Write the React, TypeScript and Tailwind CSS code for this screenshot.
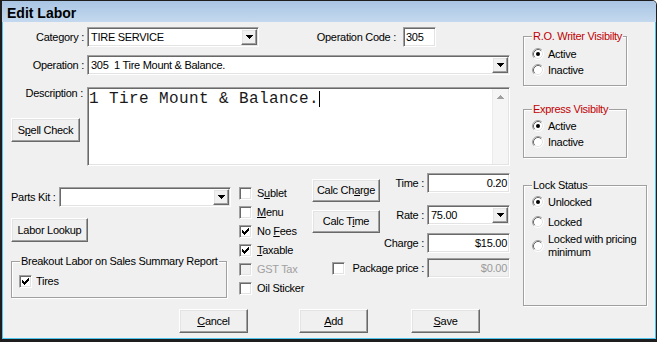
import React from "react";

const sunken =
  "border border-t-[#a0a0a0] border-l-[#a0a0a0] border-r-white border-b-white shadow-[inset_1px_1px_0_#696969,inset_-1px_-1px_0_#e3e3e3]";
const raised =
  "border border-t-white border-l-white border-r-[#696969] border-b-[#696969] shadow-[inset_-1px_-1px_0_#a0a0a0,inset_1px_1px_0_#e3e3e3]";

function DownTri({ color = "#000" }: { color?: string }) {
  return (
    <svg width="7" height="4" viewBox="0 0 7 4" shapeRendering="crispEdges">
      <rect x="0" y="0" width="7" height="1" fill={color} />
      <rect x="1" y="1" width="5" height="1" fill={color} />
      <rect x="2" y="2" width="3" height="1" fill={color} />
      <rect x="3" y="3" width="1" height="1" fill={color} />
    </svg>
  );
}

function UpTri({ color = "#a0a0a0" }: { color?: string }) {
  return (
    <svg width="7" height="4" viewBox="0 0 7 4" shapeRendering="crispEdges">
      <rect x="3" y="0" width="1" height="1" fill={color} />
      <rect x="2" y="1" width="3" height="1" fill={color} />
      <rect x="1" y="2" width="5" height="1" fill={color} />
      <rect x="0" y="3" width="7" height="1" fill={color} />
    </svg>
  );
}

function Combo({ className, value }: { className: string; value?: string }) {
  return (
    <div className={`${sunken} bg-white flex items-stretch h-[20px] p-[1px] shrink-0 ${className}`}>
      <div className="flex-1 flex items-center pl-[2px] whitespace-pre overflow-hidden">{value}</div>
      <div className={`${raised} bg-[#f0f0f0] w-[16px] flex items-center justify-center`}>
        <DownTri />
      </div>
    </div>
  );
}

function Field({
  className,
  value,
  right,
  disabled,
}: {
  className: string;
  value?: string;
  right?: boolean;
  disabled?: boolean;
}) {
  return (
    <div
      className={`${sunken} ${disabled ? "bg-[#f0f0f0] text-[#9a9a9a]" : "bg-white"} flex items-center h-[20px] p-[1px] shrink-0 ${
        right ? "justify-end pr-[2px]" : "pl-[2px]"
      } ${className}`}
    >
      {value}
    </div>
  );
}

function Button({ className, children }: { className: string; children: React.ReactNode }) {
  return (
    <div className={`${raised} bg-[#f0f0f0] flex items-center justify-center shrink-0 whitespace-nowrap ${className}`}>
      {children}
    </div>
  );
}

function Check({ checked, disabled }: { checked?: boolean; disabled?: boolean }) {
  return (
    <div
      className={`${sunken} w-[13px] h-[13px] ${disabled ? "bg-[#f0f0f0]" : "bg-white"} flex items-center justify-center shrink-0`}
    >
      {checked && (
        <svg width="7" height="7" viewBox="0 0 7 7" shapeRendering="crispEdges">
          <rect x="6" y="0" width="1" height="1" fill="#000" />
          <rect x="5" y="1" width="2" height="1" fill="#000" />
          <rect x="0" y="2" width="1" height="1" fill="#000" />
          <rect x="4" y="2" width="3" height="1" fill="#000" />
          <rect x="0" y="3" width="2" height="1" fill="#000" />
          <rect x="3" y="3" width="3" height="1" fill="#000" />
          <rect x="0" y="4" width="5" height="1" fill="#000" />
          <rect x="1" y="5" width="3" height="1" fill="#000" />
          <rect x="2" y="6" width="1" height="1" fill="#000" />
        </svg>
      )}
    </div>
  );
}

function Radio({ checked }: { checked?: boolean }) {
  return (
    <svg width="12" height="12" viewBox="0 0 12 12" className="shrink-0">
      <circle cx="6" cy="6" r="5" fill="#fff" />
      <path d="M2.11 9.89 A5.5 5.5 0 0 1 9.89 2.11" fill="none" stroke="#a0a0a0" strokeWidth="1" />
      <path d="M2.82 9.18 A4.5 4.5 0 0 1 9.18 2.82" fill="none" stroke="#696969" strokeWidth="1" />
      <path d="M9.89 2.11 A5.5 5.5 0 0 1 2.11 9.89" fill="none" stroke="#ffffff" strokeWidth="1" />
      <path d="M9.18 2.82 A4.5 4.5 0 0 1 2.82 9.18" fill="none" stroke="#e3e3e3" strokeWidth="1" />
      {checked && <circle cx="6" cy="6" r="2" fill="#000" />}
    </svg>
  );
}

function Group({
  title,
  red,
  className,
  children,
}: {
  title: string;
  red?: boolean;
  className: string;
  children: React.ReactNode;
}) {
  return (
    <div className={`relative border border-[#a0a0a0] shadow-[1px_1px_0_#ffffff,inset_1px_1px_0_#ffffff] shrink-0 ${className}`}>
      <span
        className={`absolute left-[8px] top-[-7px] bg-[#f0f0f0] px-[1px] leading-[13px] whitespace-nowrap ${
          red ? "text-[#c00000]" : "text-black"
        }`}
      >
        {title}
      </span>
      {children}
    </div>
  );
}

function CheckRow({
  checked,
  disabled,
  children,
}: {
  checked?: boolean;
  disabled?: boolean;
  children: React.ReactNode;
}) {
  return (
    <div className="flex items-center h-[19.4px]">
      <Check checked={checked} disabled={disabled} />
      <span className={`ml-[5px] whitespace-nowrap ${disabled ? "text-[#a0a0a0]" : ""}`}>{children}</span>
    </div>
  );
}

function RadioRow({ checked, children }: { checked?: boolean; children: React.ReactNode }) {
  return (
    <div className="flex items-center h-[16px]">
      <Radio checked={checked} />
      <span className="ml-[4px] whitespace-nowrap">{children}</span>
    </div>
  );
}

export default function App() {
  return (
    <div className="w-[659px] h-[342px] bg-white">
      <div className="w-[657px] h-[342px] flex flex-col border-t border-l-2 border-r border-b-[3px] border-[#1e1e1e] rounded-tr-[5px] overflow-hidden font-['Liberation_Sans',Arial,sans-serif] text-[11px] tracking-[-0.28px] leading-[13px] text-black">
        <div className="h-[21px] shrink-0 bg-gradient-to-b from-[#a9c5e4] to-[#c4d9ee] pl-[5px] pt-[4px]">
          <span className="text-[14px] font-bold leading-[16px] tracking-normal">Edit Labor</span>
        </div>
        <div className="flex-1 flex bg-[#f0f0f0] border-l border-r border-b border-[#4fc6f0]">
          {/* Left panel */}
          <div className="w-[512px] flex flex-col shrink-0">
            {/* Row 1 */}
            <div className="flex items-center mt-[5px] h-[20px]">
              <div className="w-[84px] text-right pr-[3px]">Category :</div>
              <Combo className="w-[172px]" value="TIRE SERVICE" />
              <div className="w-[144px] text-right pr-[7px]">Operation Code :</div>
              <Field className="w-[33px]" value="305" />
            </div>
            {/* Row 2 */}
            <div className="flex items-center mt-[8px] h-[20px]">
              <div className="w-[84px] text-right pr-[3px]">Operation :</div>
              <Combo className="w-[423px]" value="305  1 Tire Mount & Balance." />
            </div>
            {/* Row 3 */}
            <div className="flex mt-[12px] h-[79px]">
              <div className="w-[84px] flex flex-col">
                <div className="text-right pr-[4px] mt-[0px]">Description :</div>
                <Button className="mt-[18px] ml-[8px] w-[69px] h-[24px]">
                  <span>
                    S<span className="underline">p</span>ell Check
                  </span>
                </Button>
              </div>
              <div className={`${sunken} bg-white w-[423px] h-[79px] p-[1px] flex`}>
                <div className="flex-1 flex items-start pt-[1px] font-['Liberation_Mono','Courier_New',monospace] text-[16px] leading-[18px] tracking-[0.4px] whitespace-pre text-[#1a1a1a]">
                  <span>1 Tire Mount &amp; Balance.</span>
                  <div className="w-[1px] h-[16px] bg-black mt-[1px]" />
                </div>
                <div className="w-[16px] h-full bg-[#f5f5f5] border-l border-[#ebebeb] flex flex-col items-center pt-[6px]">
                  <UpTri />
                </div>
              </div>
            </div>
            {/* Row 4 */}
            <div className="flex h-[132px]">
              {/* Col A */}
              <div className="w-[236px] flex flex-col pl-[8px]">
                <div className="flex items-center mt-[21px] h-[20px]">
                  <div className="w-[48px] whitespace-nowrap">Parts Kit :</div>
                  <Combo className="w-[172px]" />
                </div>
                <Button className="mt-[11px] w-[77px] h-[24px]">Labor Lookup</Button>
                <Group className="mt-[19px] w-[216px] h-[37px]" title="Breakout Labor on Sales Summary Report">
                  <div className="flex items-center pl-[7px] pt-[13px]">
                    <Check checked />
                    <span className="ml-[4px]">Tires</span>
                  </div>
                </Group>
              </div>
              {/* Col B */}
              <div className="w-[73px] flex flex-col pt-[17.8px]">
                <CheckRow>
                  S<span className="underline">u</span>blet
                </CheckRow>
                <CheckRow>
                  <span className="underline">M</span>enu
                </CheckRow>
                <CheckRow checked>
                  No <span className="underline">F</span>ees
                </CheckRow>
                <CheckRow checked>
                  <span className="underline">T</span>axable
                </CheckRow>
                <CheckRow disabled>GST Tax</CheckRow>
                <CheckRow>Oil Sticker</CheckRow>
              </div>
              {/* Col CD */}
              <div className="w-[198px] flex flex-col">
                <div className="flex">
                  <div className="w-[68px] flex flex-col pt-[13px]">
                    <Button className="w-[68px] h-[23px]">
                      <span>
                        Calc Ch<span className="underline">a</span>rge
                      </span>
                    </Button>
                    <Button className="mt-[8px] w-[68px] h-[23px]">
                      <span>
                        Calc T<span className="underline">i</span>me
                      </span>
                    </Button>
                  </div>
                  <div className="flex-1 flex flex-col pt-[7px]">
                    <div className="flex items-center h-[20px]">
                      <div className="flex-1 text-right pr-[3px]">Time :</div>
                      <Field className="w-[83px]" value="0.20" right />
                    </div>
                    <div className="flex items-center h-[20px] mt-[12px]">
                      <div className="flex-1 text-right pr-[3px]">Rate :</div>
                      <Combo className="w-[83px]" value="75.00" />
                    </div>
                    <div className="flex items-center h-[20px] mt-[8px]">
                      <div className="flex-1 text-right pr-[3px]">Charge :</div>
                      <Field className="w-[83px]" value="$15.00" right />
                    </div>
                  </div>
                </div>
                <div className="flex items-center h-[20px] mt-[5px]">
                  <div className="ml-[20px]">
                    <Check />
                  </div>
                  <div className="flex-1 text-right pr-[3px] whitespace-nowrap">Package price :</div>
                  <Field className="w-[83px]" value="$0.00" right disabled />
                </div>
              </div>
            </div>
            {/* Row 5 */}
            <div className="flex mt-[11px]">
              <Button className="ml-[176px] w-[69px] h-[24px]">
                <span>
                  <span className="underline">C</span>ancel
                </span>
              </Button>
              <Button className="ml-[51px] w-[69px] h-[24px]">
                <span>
                  <span className="underline">A</span>dd
                </span>
              </Button>
              <Button className="ml-[43px] w-[69px] h-[24px]">
                <span>
                  <span className="underline">S</span>ave
                </span>
              </Button>
            </div>
          </div>
          {/* Right panel */}
          <div className="flex flex-col ml-[8px]">
            <Group className="mt-[14px] w-[104px] h-[50px]" title="R.O. Writer Visibilty" red>
              <div className="pl-[8px] pt-[9px]">
                <RadioRow checked>Active</RadioRow>
                <RadioRow>Inactive</RadioRow>
              </div>
            </Group>
            <Group className="mt-[23px] w-[104px] h-[49px]" title="Express Visibilty" red>
              <div className="pl-[8px] pt-[8px]">
                <RadioRow checked>Active</RadioRow>
                <RadioRow>Inactive</RadioRow>
              </div>
            </Group>
            <Group className="mt-[27px] w-[124px] h-[121px]" title="Lock Status">
              <div className="pl-[8px] pt-[8px]">
                <RadioRow checked>Unlocked</RadioRow>
                <div className="mt-[4px]">
                  <RadioRow>Locked</RadioRow>
                </div>
                <div className="flex items-center mt-[3px]">
                  <Radio />
                  <span className="ml-[4px] leading-[13px]">
                    Locked with pricing
                    <br />
                    minimum
                  </span>
                </div>
              </div>
            </Group>
          </div>
        </div>
      </div>
    </div>
  );
}
